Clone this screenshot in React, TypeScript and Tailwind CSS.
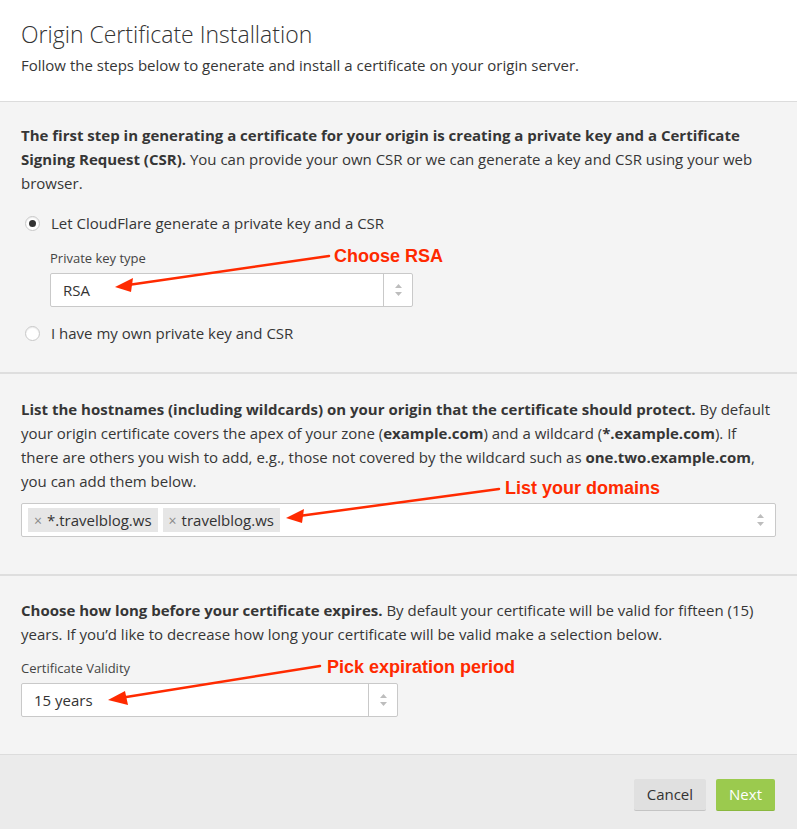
import React from 'react';

const Radio = ({ checked }: { checked?: boolean }) => (
  <span className="w-[15px] h-[15px] rounded-full border border-[#c8c8c8] bg-white flex items-center justify-center shadow-[inset_0_1px_1px_rgba(0,0,0,0.08)]">
    {checked && <span className="w-[7px] h-[7px] rounded-full bg-[#333]" />}
  </span>
);

const Updown = () => (
  <svg width="9" height="14" viewBox="0 0 9 14" className="text-[#bdbdbd]">
    <path d="M4.5 1 L8 5 L1 5 Z" fill="currentColor" />
    <path d="M4.5 13 L8 9 L1 9 Z" fill="currentColor" />
  </svg>
);

const Select = ({ value, width }: { value: string; width: string }) => (
  <div className={`${width} h-[34px] flex bg-white border border-[#c9c9c9] rounded-[2px]`}>
    <div className="flex-1 flex items-center px-[12px] text-[15px] text-[#333]">{value}</div>
    <div className="w-[29px] border-l border-[#c9c9c9] flex items-center justify-center">
      <Updown />
    </div>
  </div>
);

const Tag = ({ label }: { label: string }) => (
  <span className="h-[24px] flex items-center gap-[5px] bg-[#e6e6e6] px-[6px] text-[15px] text-[#333]">
    <span className="text-[#8a8a8a] text-[14px]">×</span>
    {label}
  </span>
);

export default function App() {
  return (
    <div className="relative w-[797px] min-h-[829px] bg-white text-[#363636] font-['Open_Sans',sans-serif]">
      <header className="h-[102px] px-[21px] pt-[19px] border-b border-[#dcdcdc]">
        <h1 className="text-[23px] leading-[30px] font-light text-[#333]">Origin Certificate Installation</h1>
        <p className="mt-[4px] text-[15px] leading-[24px]">Follow the steps below to generate and install a certificate on your origin server.</p>
      </header>

      <section className="bg-[#f4f4f4] px-[21px] pt-[21px] pb-[27px] border-b-2 border-[#dedede]">
        <p className="text-[15px] leading-[24px]">
          <b className="font-bold">The first step in generating a certificate for your origin is creating a private key and a Certificate Signing Request (CSR).</b>{' '}
          You can provide your own CSR or we can generate a key and CSR using your web browser.
        </p>
        <label className="mt-[16px] flex items-center gap-[11px] pl-[4px] text-[15px] leading-[24px]">
          <Radio checked />
          Let CloudFlare generate a private key and a CSR
        </label>
        <div className="pl-[29px]">
          <div className="mt-[14px] text-[13px] leading-[18px] text-[#444]">Private key type</div>
          <div className="mt-[6px]">
            <Select value="RSA" width="w-[363px]" />
          </div>
        </div>
        <label className="mt-[14px] flex items-center gap-[11px] pl-[4px] text-[15px] leading-[24px]">
          <Radio />
          I have my own private key and CSR
        </label>
      </section>

      <section className="bg-[#f4f4f4] px-[21px] pt-[23px] pb-[37px] border-b-2 border-[#dedede]">
        <p className="text-[15px] leading-[24px]">
          <b className="font-bold">List the hostnames (including wildcards) on your origin that the certificate should protect.</b>{' '}
          By default your origin certificate covers the apex of your zone (<b className="font-bold">example.com</b>) and a wildcard (
          <b className="font-bold">*.example.com</b>). If there are others you wish to add, e.g., those not covered by the wildcard such as{' '}
          <b className="font-bold">one.two.example.com</b>, you can add them below.
        </p>
        <div className="mt-[10px] h-[34px] flex items-center gap-[5px] bg-white border border-[#c9c9c9] rounded-[2px] pl-[6px] pr-[10px]">
          <Tag label="*.travelblog.ws" />
          <Tag label="travelblog.ws" />
          <div className="flex-1" />
          <Updown />
        </div>
      </section>

      <section className="bg-[#f4f4f4] px-[21px] pt-[22px] pb-[37px]">
        <p className="text-[15px] leading-[24px]">
          <b className="font-bold">Choose how long before your certificate expires.</b> By default your certificate will be valid for fifteen (15) years. If you’d like to decrease how long your certificate will be valid make a selection below.
        </p>
        <div className="mt-[13px] text-[13px] leading-[18px] text-[#444]">Certificate Validity</div>
        <div className="mt-[6px]">
          <Select value="15 years" width="w-[377px]" />
        </div>
      </section>

      <footer className="h-[76px] bg-[#ebebeb] border-t border-[#dcdcdc] flex justify-end items-start gap-[10px] pt-[24px] pr-[22px]">
        <button className="h-[32px] px-[13px] rounded-[2px] bg-[#e0e0e0] border-b border-[#c4c4c4] text-[15px] text-[#333]">Cancel</button>
        <button className="h-[32px] px-[13px] rounded-[2px] bg-[#9bca4e] border-b border-[#8ab83f] text-[15px] text-white">Next</button>
      </footer>

      {/* annotations */}
      <div className="absolute left-[334px] top-[243px] text-[18px] font-bold text-[#ff2a00] font-['Liberation_Sans',sans-serif]">Choose RSA</div>
      <div className="absolute left-[505px] top-[475px] text-[18px] font-bold text-[#ff2a00] font-['Liberation_Sans',sans-serif]">List your domains</div>
      <div className="absolute left-[327px] top-[654px] text-[18px] font-bold text-[#ff2a00] font-['Liberation_Sans',sans-serif]">Pick expiration period</div>
      <svg className="absolute inset-0 pointer-events-none" width="797" height="829">
        <g stroke="#ff2a00" strokeWidth="2.5" strokeLinecap="round">
          <line x1="329" y1="256" x2="128" y2="285" />
          <line x1="499" y1="489" x2="299" y2="516" />
          <line x1="320" y1="666" x2="120" y2="698" />
        </g>
        <g fill="#ff2a00">
          <polygon points="115,287 133,278 131,292" />
          <polygon points="286,518 304,509 302,523" />
          <polygon points="108,700 125,691 128,705" />
        </g>
      </svg>
    </div>
  );
}
